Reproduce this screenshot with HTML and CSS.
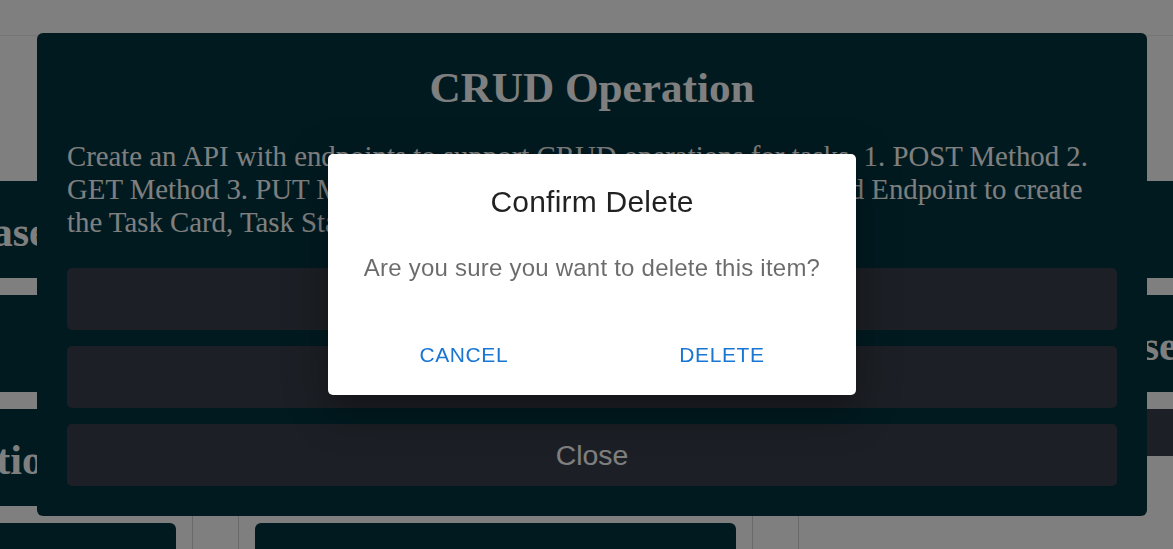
FILE: index.html
```html
<!DOCTYPE html>
<html lang="en">
<head>
<meta charset="utf-8">
<title>Task Board</title>
<link rel="stylesheet" href="styles.css">
</head>
<body>
<header class="topbar"></header>
<main class="board">
  <section class="lane lane-narrow">
    <article class="card"><h2 class="card-title shift-left">Database</h2></article>
    <article class="card"></article>
    <article class="card"><h2 class="card-title shift-left">Operation</h2></article>
    <article class="card"></article>
  </section>
  <section class="lane">
    <article class="card"></article>
    <article class="card"></article>
    <article class="card"></article>
    <article class="card"></article>
  </section>
  <section class="lane">
    <article class="card"></article>
    <article class="card"><h2 class="card-title shift-right">Database</h2></article>
    <div class="lane-button"></div>
  </section>
</main>

<div class="modal-layer">
  <div class="task-modal">
    <h1 class="task-title">CRUD Operation</h1>
    <p class="task-desc">Create an API with endpoints to support CRUD operations for tasks. 1. POST Method 2. GET Method 3. PUT Method 4. DELETE Method 5. Use the defined Endpoint to create the Task Card, Task Status and Task Details.</p>
    <div class="task-actions">
      <button class="task-btn">Edit</button>
      <button class="task-btn">Delete</button>
      <button class="task-btn">Close</button>
    </div>
  </div>
</div>

<div class="backdrop"></div>

<div class="dialog-layer">
  <div class="dialog" role="dialog">
    <h2 class="dialog-title">Confirm Delete</h2>
    <div class="dialog-content">
      <p class="dialog-text">Are you sure you want to delete this item?</p>
    </div>
    <div class="dialog-actions">
      <button class="text-btn">CANCEL</button>
      <button class="text-btn">DELETE</button>
    </div>
  </div>
</div>
</body>
</html>
```
FILE: styles.css
```css
* {
  box-sizing: border-box;
}

html,
body {
  margin: 0;
  height: 100%;
}

body {
  width: 1173px;
  height: 549px;
  overflow: hidden;
  background: #ffffff;
  font-family: "Liberation Serif", "Times New Roman", serif;
}

/* ---------- background page ---------- */
.topbar {
  height: 36px;
  background: #ffffff;
  border-bottom: 1px solid #ececec;
}

.board {
  display: flex;
  align-items: stretch;
  gap: 45px;
  margin-left: -40px;
  height: 513px;
}

.lane {
  flex: 0 0 515px;
  display: flex;
  flex-direction: column;
  gap: 17px;
  padding: 145px 16px 16px;
  background: #ffffff;
  border-left: 1px solid #d2d2d2;
  border-right: 1px solid #d2d2d2;
}

.lane-narrow {
  flex-basis: 233px;
}

.card {
  flex: 0 0 97px;
  padding-top: 27px;
  background: #003440;
  border-radius: 6px;
  overflow: hidden;
}

.card-title {
  margin: 0;
  font-size: 42px;
  font-weight: bold;
  line-height: 48px;
  color: #ffffff;
  white-space: nowrap;
}

.shift-left {
  margin-left: -95px;
}

.shift-right {
  margin-left: 197px;
}

.lane-button {
  flex: 0 0 47px;
  background: #393f4b;
  border-radius: 4px;
}

/* ---------- task modal ---------- */
.modal-layer {
  position: fixed;
  top: 0;
  left: 0;
  width: 1184px;
  height: 549px;
  display: flex;
  align-items: center;
  justify-content: center;
}

.task-modal {
  width: 1110px;
  padding: 30px;
  background: #003440;
  border-radius: 6px;
  color: #ffffff;
}

.task-title {
  margin: 0 0 27.5px;
  font-size: 43.2px;
  line-height: 49.7px;
  font-weight: bold;
  text-align: center;
}

.task-desc {
  margin: 0 0 29.5px;
  font-size: 28.8px;
  line-height: 33px;
}

.task-actions {
  display: flex;
  flex-direction: column;
  gap: 16px;
}

.task-btn {
  height: 62px;
  border: 0;
  border-radius: 5px;
  background: #393f4b;
  color: #ffffff;
  font-family: "Liberation Sans", Arial, sans-serif;
  font-size: 28.4px;
  padding: 0;
}

/* ---------- confirm dialog ---------- */
.backdrop {
  position: fixed;
  inset: 0;
  background: rgba(0, 0, 0, 0.5);
}

.dialog-layer {
  position: fixed;
  top: 0;
  left: 0;
  width: 1184px;
  height: 549px;
  display: flex;
  align-items: center;
  justify-content: center;
}

.dialog {
  background: #ffffff;
  border-radius: 5px;
  font-family: "Liberation Sans", Arial, sans-serif;
  color: rgba(0, 0, 0, 0.87);
  box-shadow: 0 11px 15px -7px rgba(0, 0, 0, 0.2),
    0 24px 38px 3px rgba(0, 0, 0, 0.14),
    0 9px 46px 8px rgba(0, 0, 0, 0.12);
}

.dialog-title {
  margin: 0;
  padding: 24px 36px;
  font-size: 30px;
  font-weight: 500;
  line-height: 48px;
  letter-spacing: 0.0075em;
  text-align: center;
}

.dialog-content {
  padding: 0 36px 30px;
}

.dialog-text {
  margin: 0;
  font-size: 24px;
  line-height: 36px;
  letter-spacing: 0.00938em;
  color: rgba(0, 0, 0, 0.58);
}

.dialog-actions {
  display: flex;
  justify-content: space-around;
  padding: 12px;
}

.text-btn {
  min-width: 96px;
  padding: 9px 12px;
  border: 0;
  background: transparent;
  color: #1976d2;
  font-family: "Liberation Sans", Arial, sans-serif;
  font-size: 21px;
  line-height: 36.75px;
  letter-spacing: 0.02857em;
}

.text-btn + .text-btn {
  margin-left: 12px;
}
```
